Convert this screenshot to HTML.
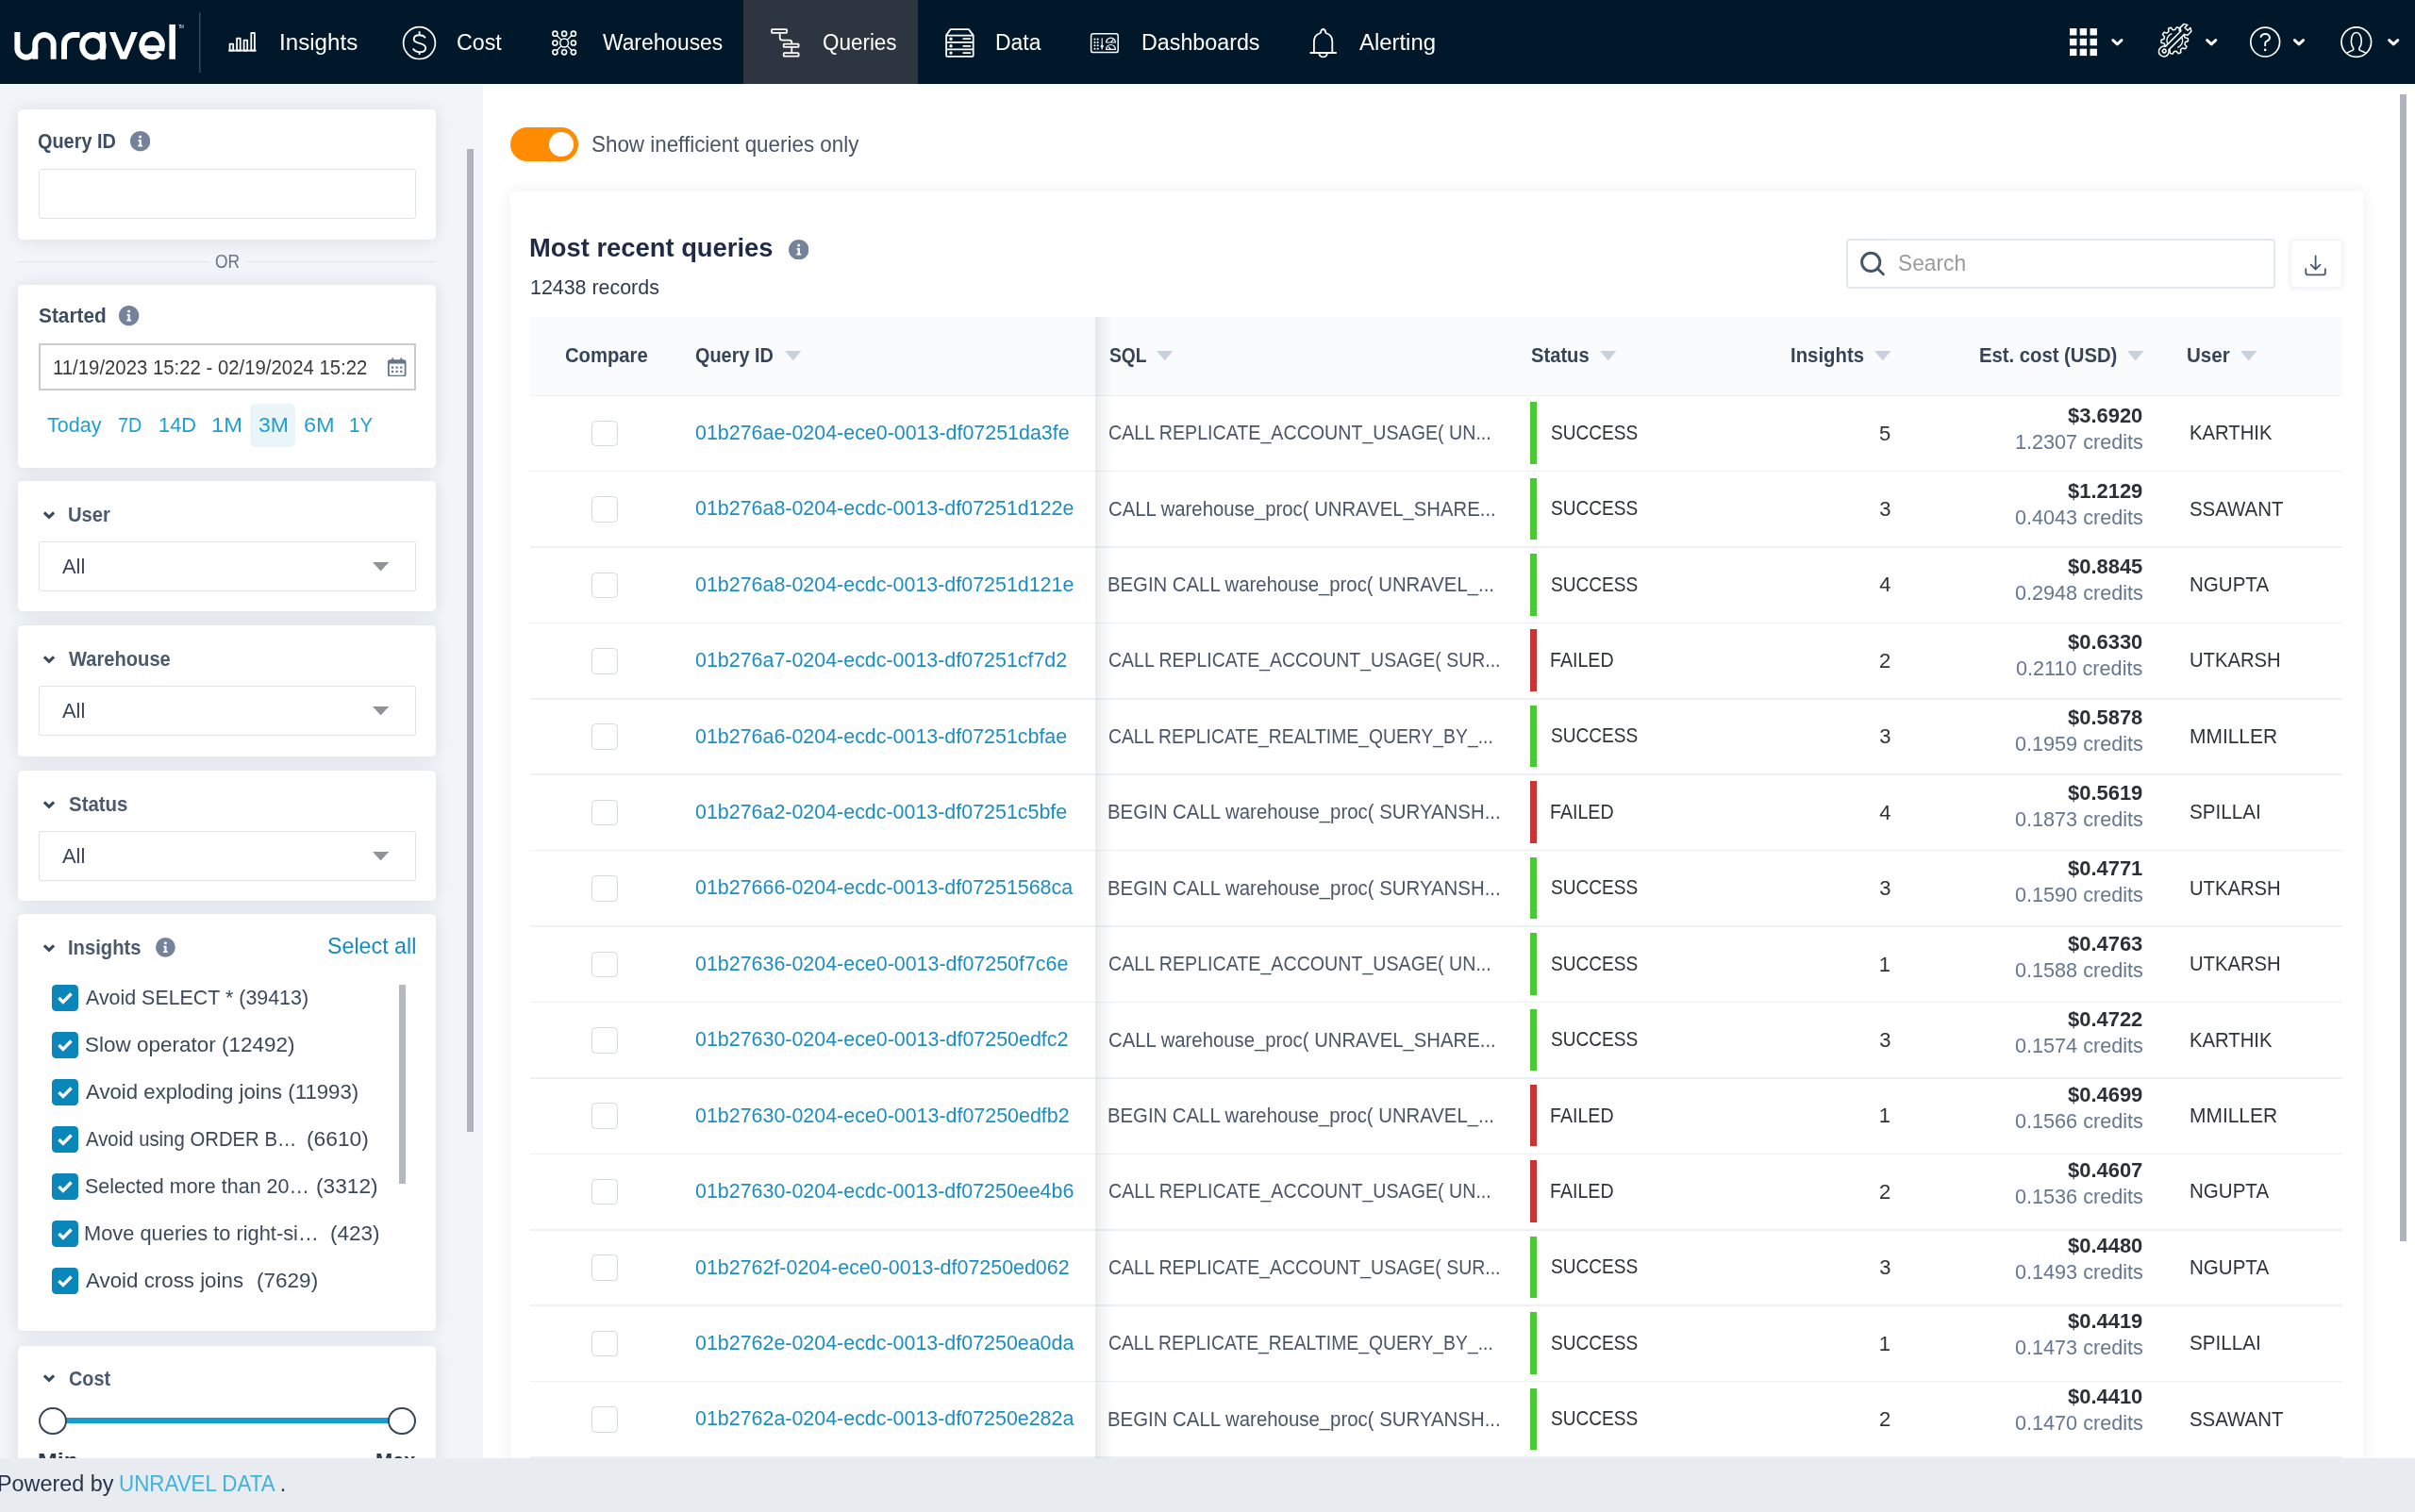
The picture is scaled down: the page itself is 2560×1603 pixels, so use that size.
<!DOCTYPE html>
<html><head><meta charset="utf-8"><title>Queries</title>
<style>
html,body{margin:0;padding:0;}
body{width:2560px;height:1603px;overflow:hidden;position:relative;background:#fff;font-family:"Liberation Sans",sans-serif;}
.t{position:absolute;line-height:1;white-space:pre;}
.L{will-change:transform;}
svg{display:block;}
</style></head><body>
<div style="position:absolute;left:512px;top:89px;width:2048px;height:1457px;background:#fff;overflow:hidden">
<div class="L" style="position:absolute;left:-512px;top:-89px;width:2560px;height:1603px">
<div style="position:absolute;left:541.00px;top:135.00px;width:72.00px;height:36.00px;background:#ff8c00;border-radius:18px"></div>
<div style="position:absolute;left:582.00px;top:140.00px;width:25.60px;height:25.60px;background:#fff;border-radius:50%"></div>
<div class="t" style="left:626.60px;top:141px;font-size:23.75px;color:#475467;transform:scaleX(0.9428);transform-origin:0 0;">Show inefficient queries only</div>
<div style="position:absolute;left:541.00px;top:202.50px;width:1964.00px;height:1500.00px;background:#fff;border-radius:5px;box-shadow:0 0 18px rgba(20,30,50,0.07)"></div>
<div class="t" style="left:561.36px;top:249px;font-size:27.75px;color:#1f2a46;font-weight:700;transform:scaleX(0.9858);transform-origin:0 0;">Most recent queries</div>
<svg style="position:absolute;left:835.85px;top:253.75px" width="21.5" height="21.5" viewBox="0 0 20 20"><circle cx="10" cy="10" r="10" fill="#74829a"/><circle cx="10" cy="5.6" r="1.45" fill="#fff"/><path d="M8,8.4 H11.1 V13.8 H12.3 V15.4 H7.8 V13.8 H9 V10 H8 Z" fill="#fff"/></svg>
<div class="t" style="left:561.50px;top:293px;font-size:22.75px;color:#2f3b4c;transform:scaleX(0.9409);transform-origin:0 0;">12438 records</div>
<div style="position:absolute;left:1956.80px;top:253.20px;width:454.80px;height:53.00px;border:2px solid #e3e8ee;box-sizing:border-box;border-radius:4px;background:#fff"></div>
<svg style="position:absolute;left:1971px;top:266px" width="28" height="28" viewBox="0 0 28 28"><circle cx="12.2" cy="11.9" r="9.6" fill="none" stroke="#45556a" stroke-width="2.9"/><path d="M19.2,18.8 L25.4,24.8" stroke="#45556a" stroke-width="2.9" stroke-linecap="round"/></svg>
<div class="t" style="left:2011.79px;top:268px;font-size:23.25px;color:#9b9b9b;transform:scaleX(0.9786);transform-origin:0 0;">Search</div>
<div style="position:absolute;left:2427.50px;top:254.00px;width:55.00px;height:51.00px;border:1px solid #f1f3f6;box-sizing:border-box;border-radius:4px;background:#fff;box-shadow:0 1px 6px rgba(30,40,60,0.08)"></div>
<svg style="position:absolute;left:2441.5px;top:270px" width="25" height="23" viewBox="0 0 25 23"><path d="M12.6,1.5 V15 M7.7,10.6 L12.6,15.4 L17.5,10.6" fill="none" stroke="#4a586b" stroke-width="1.8" stroke-linecap="round"/><path d="M2.3,15.2 V19.3 Q2.3,21.3 4.3,21.3 H20.9 Q22.9,21.3 22.9,19.3 V15.2" fill="none" stroke="#4a586b" stroke-width="1.8" stroke-linecap="round"/></svg>
<div style="position:absolute;left:562.30px;top:335.70px;width:1921.20px;height:83.30px;background:#fafbfc"></div>
<div style="position:absolute;left:562.30px;top:418.60px;width:1921.20px;height:1.60px;background:#eceff3"></div>
<div class="t" style="left:599.09px;top:365px;font-size:22.75px;color:#364457;font-weight:700;transform:scaleX(0.8898);transform-origin:0 0;">Compare</div>
<div class="t" style="left:737.41px;top:365px;font-size:22.75px;color:#364457;font-weight:700;transform:scaleX(0.8736);transform-origin:0 0;">Query ID</div>
<div class="t" style="left:1175.52px;top:365px;font-size:22.75px;color:#364457;font-weight:700;transform:scaleX(0.8443);transform-origin:0 0;">SQL</div>
<div class="t" style="left:1622.60px;top:365px;font-size:22.75px;color:#364457;font-weight:700;transform:scaleX(0.8864);transform-origin:0 0;">Status</div>
<div class="t" style="left:1898.28px;top:365px;font-size:22.75px;color:#364457;font-weight:700;transform:scaleX(0.8939);transform-origin:0 0;">Insights</div>
<div class="t" style="left:2098.08px;top:365px;font-size:22.75px;color:#364457;font-weight:700;transform:scaleX(0.8902);transform-origin:0 0;">Est. cost (USD)</div>
<div class="t" style="left:2318.27px;top:365px;font-size:22.75px;color:#364457;font-weight:700;transform:scaleX(0.9038);transform-origin:0 0;">User</div>
<svg style="position:absolute;left:831.7px;top:372.0px" width="17.5" height="10.4" viewBox="0 0 17.5 10.4"><path d="M0,0 H17.5 L8.8,10.4 Z" fill="#c9d1db"/></svg>
<svg style="position:absolute;left:1225.6px;top:372.0px" width="17.5" height="10.4" viewBox="0 0 17.5 10.4"><path d="M0,0 H17.5 L8.8,10.4 Z" fill="#c9d1db"/></svg>
<svg style="position:absolute;left:1695.5px;top:372.0px" width="17.5" height="10.4" viewBox="0 0 17.5 10.4"><path d="M0,0 H17.5 L8.8,10.4 Z" fill="#c9d1db"/></svg>
<svg style="position:absolute;left:1987.0px;top:372.0px" width="17.5" height="10.4" viewBox="0 0 17.5 10.4"><path d="M0,0 H17.5 L8.8,10.4 Z" fill="#c9d1db"/></svg>
<svg style="position:absolute;left:2254.7px;top:372.0px" width="17.5" height="10.4" viewBox="0 0 17.5 10.4"><path d="M0,0 H17.5 L8.8,10.4 Z" fill="#c9d1db"/></svg>
<svg style="position:absolute;left:2374.7px;top:372.0px" width="17.5" height="10.4" viewBox="0 0 17.5 10.4"><path d="M0,0 H17.5 L8.8,10.4 Z" fill="#c9d1db"/></svg>
<div style="position:absolute;left:627.30px;top:445.70px;width:27.60px;height:27.60px;border:1.6px solid #d3d9e1;box-sizing:border-box;border-radius:4.5px;background:#fff"></div>
<div class="t" style="left:736.96px;top:447px;font-size:22.75px;color:#1b8dc1;transform:scaleX(0.9415);transform-origin:0 0;">01b276ae-0204-ece0-0013-df07251da3fe</div>
<div class="t" style="left:1175.02px;top:448px;font-size:22.25px;color:#4a5668;transform:scaleX(0.8822);transform-origin:0 0;">CALL REPLICATE_ACCOUNT_USAGE( UN...</div>
<div style="position:absolute;left:1621.90px;top:426.20px;width:7.20px;height:65.50px;background:#4bc934"></div>
<div class="t" style="left:1643.94px;top:448px;font-size:21.75px;color:#2f3338;transform:scaleX(0.8775);transform-origin:0 0;">SUCCESS</div>
<div class="t" style="left:1992.04px;top:449px;font-size:22px;color:#2f3338;letter-spacing:0.000px;">5</div>
<div class="t" style="left:2192.48px;top:429px;font-size:22.75px;color:#2c2f33;font-weight:700;transform:scaleX(0.9645);transform-origin:0 0;">$3.6920</div>
<div class="t" style="left:2135.79px;top:457px;font-size:22.75px;color:#657690;transform:scaleX(0.9507);transform-origin:0 0;">1.2307 credits</div>
<div class="t" style="left:2320.68px;top:448px;font-size:21.75px;color:#2f3338;transform:scaleX(0.9317);transform-origin:0 0;">KARTHIK</div>
<div style="position:absolute;left:562.30px;top:498.81px;width:1921.20px;height:1.60px;background:#eef1f4"></div>
<div style="position:absolute;left:627.30px;top:526.12px;width:27.60px;height:27.60px;border:1.6px solid #d3d9e1;box-sizing:border-box;border-radius:4.5px;background:#fff"></div>
<div class="t" style="left:736.96px;top:527px;font-size:22.75px;color:#1b8dc1;transform:scaleX(0.9415);transform-origin:0 0;">01b276a8-0204-ecdc-0013-df07251d122e</div>
<div class="t" style="left:1174.99px;top:529px;font-size:22.25px;color:#4a5668;transform:scaleX(0.9123);transform-origin:0 0;">CALL warehouse_proc( UNRAVEL_SHARE...</div>
<div style="position:absolute;left:1621.90px;top:506.62px;width:7.20px;height:65.50px;background:#4bc934"></div>
<div class="t" style="left:1643.94px;top:528px;font-size:21.75px;color:#2f3338;transform:scaleX(0.8775);transform-origin:0 0;">SUCCESS</div>
<div class="t" style="left:1992.15px;top:529px;font-size:22px;color:#2f3338;letter-spacing:0.000px;">3</div>
<div class="t" style="left:2192.48px;top:509px;font-size:22.75px;color:#2c2f33;font-weight:700;transform:scaleX(0.9645);transform-origin:0 0;">$1.2129</div>
<div class="t" style="left:2135.79px;top:537px;font-size:22.75px;color:#657690;transform:scaleX(0.9507);transform-origin:0 0;">0.4043 credits</div>
<div class="t" style="left:2321.48px;top:529px;font-size:21.75px;color:#2f3338;transform:scaleX(0.9387);transform-origin:0 0;">SSAWANT</div>
<div style="position:absolute;left:562.30px;top:579.23px;width:1921.20px;height:1.60px;background:#eef1f4"></div>
<div style="position:absolute;left:627.30px;top:606.53px;width:27.60px;height:27.60px;border:1.6px solid #d3d9e1;box-sizing:border-box;border-radius:4.5px;background:#fff"></div>
<div class="t" style="left:736.96px;top:608px;font-size:22.75px;color:#1b8dc1;transform:scaleX(0.9415);transform-origin:0 0;">01b276a8-0204-ecdc-0013-df07251d121e</div>
<div class="t" style="left:1174.37px;top:609px;font-size:22.25px;color:#4a5668;transform:scaleX(0.9132);transform-origin:0 0;">BEGIN CALL warehouse_proc( UNRAVEL_...</div>
<div style="position:absolute;left:1621.90px;top:587.03px;width:7.20px;height:65.50px;background:#4bc934"></div>
<div class="t" style="left:1643.94px;top:609px;font-size:21.75px;color:#2f3338;transform:scaleX(0.8775);transform-origin:0 0;">SUCCESS</div>
<div class="t" style="left:1992.15px;top:609px;font-size:22px;color:#2f3338;letter-spacing:0.000px;">4</div>
<div class="t" style="left:2192.26px;top:589px;font-size:22.75px;color:#2c2f33;font-weight:700;transform:scaleX(0.9645);transform-origin:0 0;">$0.8845</div>
<div class="t" style="left:2135.79px;top:617px;font-size:22.75px;color:#657690;transform:scaleX(0.9507);transform-origin:0 0;">0.2948 credits</div>
<div class="t" style="left:2320.66px;top:609px;font-size:21.75px;color:#2f3338;transform:scaleX(0.9445);transform-origin:0 0;">NGUPTA</div>
<div style="position:absolute;left:562.30px;top:659.64px;width:1921.20px;height:1.60px;background:#eef1f4"></div>
<div style="position:absolute;left:627.30px;top:686.94px;width:27.60px;height:27.60px;border:1.6px solid #d3d9e1;box-sizing:border-box;border-radius:4.5px;background:#fff"></div>
<div class="t" style="left:736.96px;top:688px;font-size:22.75px;color:#1b8dc1;transform:scaleX(0.9415);transform-origin:0 0;">01b276a7-0204-ecdc-0013-df07251cf7d2</div>
<div class="t" style="left:1175.03px;top:689px;font-size:22.25px;color:#4a5668;transform:scaleX(0.8751);transform-origin:0 0;">CALL REPLICATE_ACCOUNT_USAGE( SUR...</div>
<div style="position:absolute;left:1621.90px;top:667.44px;width:7.20px;height:65.50px;background:#c93535"></div>
<div class="t" style="left:1643.13px;top:689px;font-size:21.75px;color:#2f3338;transform:scaleX(0.9019);transform-origin:0 0;">FAILED</div>
<div class="t" style="left:1992.04px;top:690px;font-size:22px;color:#2f3338;letter-spacing:0.000px;">2</div>
<div class="t" style="left:2192.48px;top:669px;font-size:22.75px;color:#2c2f33;font-weight:700;transform:scaleX(0.9645);transform-origin:0 0;">$0.6330</div>
<div class="t" style="left:2137.39px;top:697px;font-size:22.75px;color:#657690;transform:scaleX(0.9507);transform-origin:0 0;">0.2110 credits</div>
<div class="t" style="left:2320.88px;top:689px;font-size:21.75px;color:#2f3338;transform:scaleX(0.9302);transform-origin:0 0;">UTKARSH</div>
<div style="position:absolute;left:562.30px;top:740.06px;width:1921.20px;height:1.60px;background:#eef1f4"></div>
<div style="position:absolute;left:627.30px;top:767.36px;width:27.60px;height:27.60px;border:1.6px solid #d3d9e1;box-sizing:border-box;border-radius:4.5px;background:#fff"></div>
<div class="t" style="left:736.96px;top:769px;font-size:22.75px;color:#1b8dc1;transform:scaleX(0.9415);transform-origin:0 0;">01b276a6-0204-ecdc-0013-df07251cbfae</div>
<div class="t" style="left:1175.03px;top:770px;font-size:22.25px;color:#4a5668;transform:scaleX(0.8693);transform-origin:0 0;">CALL REPLICATE_REALTIME_QUERY_BY_...</div>
<div style="position:absolute;left:1621.90px;top:747.86px;width:7.20px;height:65.50px;background:#4bc934"></div>
<div class="t" style="left:1643.94px;top:769px;font-size:21.75px;color:#2f3338;transform:scaleX(0.8775);transform-origin:0 0;">SUCCESS</div>
<div class="t" style="left:1992.15px;top:770px;font-size:22px;color:#2f3338;letter-spacing:0.000px;">3</div>
<div class="t" style="left:2192.26px;top:749px;font-size:22.75px;color:#2c2f33;font-weight:700;transform:scaleX(0.9645);transform-origin:0 0;">$0.5878</div>
<div class="t" style="left:2135.79px;top:777px;font-size:22.75px;color:#657690;transform:scaleX(0.9507);transform-origin:0 0;">0.1959 credits</div>
<div class="t" style="left:2320.63px;top:770px;font-size:21.75px;color:#2f3338;transform:scaleX(0.9625);transform-origin:0 0;">MMILLER</div>
<div style="position:absolute;left:562.30px;top:820.48px;width:1921.20px;height:1.60px;background:#eef1f4"></div>
<div style="position:absolute;left:627.30px;top:847.78px;width:27.60px;height:27.60px;border:1.6px solid #d3d9e1;box-sizing:border-box;border-radius:4.5px;background:#fff"></div>
<div class="t" style="left:736.96px;top:849px;font-size:22.75px;color:#1b8dc1;transform:scaleX(0.9415);transform-origin:0 0;">01b276a2-0204-ecdc-0013-df07251c5bfe</div>
<div class="t" style="left:1174.37px;top:850px;font-size:22.25px;color:#4a5668;transform:scaleX(0.9164);transform-origin:0 0;">BEGIN CALL warehouse_proc( SURYANSH...</div>
<div style="position:absolute;left:1621.90px;top:828.28px;width:7.20px;height:65.50px;background:#c93535"></div>
<div class="t" style="left:1643.13px;top:850px;font-size:21.75px;color:#2f3338;transform:scaleX(0.9019);transform-origin:0 0;">FAILED</div>
<div class="t" style="left:1992.15px;top:851px;font-size:22px;color:#2f3338;letter-spacing:0.000px;">4</div>
<div class="t" style="left:2192.48px;top:829px;font-size:22.75px;color:#2c2f33;font-weight:700;transform:scaleX(0.9645);transform-origin:0 0;">$0.5619</div>
<div class="t" style="left:2135.79px;top:857px;font-size:22.75px;color:#657690;transform:scaleX(0.9507);transform-origin:0 0;">0.1873 credits</div>
<div class="t" style="left:2321.47px;top:850px;font-size:21.75px;color:#2f3338;transform:scaleX(0.9491);transform-origin:0 0;">SPILLAI</div>
<div style="position:absolute;left:562.30px;top:900.89px;width:1921.20px;height:1.60px;background:#eef1f4"></div>
<div style="position:absolute;left:627.30px;top:928.19px;width:27.60px;height:27.60px;border:1.6px solid #d3d9e1;box-sizing:border-box;border-radius:4.5px;background:#fff"></div>
<div class="t" style="left:736.96px;top:929px;font-size:22.75px;color:#1b8dc1;transform:scaleX(0.9415);transform-origin:0 0;">01b27666-0204-ecdc-0013-df07251568ca</div>
<div class="t" style="left:1174.37px;top:931px;font-size:22.25px;color:#4a5668;transform:scaleX(0.9164);transform-origin:0 0;">BEGIN CALL warehouse_proc( SURYANSH...</div>
<div style="position:absolute;left:1621.90px;top:908.69px;width:7.20px;height:65.50px;background:#4bc934"></div>
<div class="t" style="left:1643.94px;top:930px;font-size:21.75px;color:#2f3338;transform:scaleX(0.8775);transform-origin:0 0;">SUCCESS</div>
<div class="t" style="left:1992.15px;top:931px;font-size:22px;color:#2f3338;letter-spacing:0.000px;">3</div>
<div class="t" style="left:2192.26px;top:909px;font-size:22.75px;color:#2c2f33;font-weight:700;transform:scaleX(0.9645);transform-origin:0 0;">$0.4771</div>
<div class="t" style="left:2135.79px;top:937px;font-size:22.75px;color:#657690;transform:scaleX(0.9507);transform-origin:0 0;">0.1590 credits</div>
<div class="t" style="left:2320.88px;top:931px;font-size:21.75px;color:#2f3338;transform:scaleX(0.9302);transform-origin:0 0;">UTKARSH</div>
<div style="position:absolute;left:562.30px;top:981.31px;width:1921.20px;height:1.60px;background:#eef1f4"></div>
<div style="position:absolute;left:627.30px;top:1008.61px;width:27.60px;height:27.60px;border:1.6px solid #d3d9e1;box-sizing:border-box;border-radius:4.5px;background:#fff"></div>
<div class="t" style="left:736.96px;top:1010px;font-size:22.75px;color:#1b8dc1;transform:scaleX(0.9415);transform-origin:0 0;">01b27636-0204-ece0-0013-df07250f7c6e</div>
<div class="t" style="left:1175.02px;top:1011px;font-size:22.25px;color:#4a5668;transform:scaleX(0.8822);transform-origin:0 0;">CALL REPLICATE_ACCOUNT_USAGE( UN...</div>
<div style="position:absolute;left:1621.90px;top:989.11px;width:7.20px;height:65.50px;background:#4bc934"></div>
<div class="t" style="left:1643.94px;top:1011px;font-size:21.75px;color:#2f3338;transform:scaleX(0.8775);transform-origin:0 0;">SUCCESS</div>
<div class="t" style="left:1991.82px;top:1012px;font-size:22px;color:#2f3338;letter-spacing:0.000px;">1</div>
<div class="t" style="left:2192.48px;top:989px;font-size:22.75px;color:#2c2f33;font-weight:700;transform:scaleX(0.9645);transform-origin:0 0;">$0.4763</div>
<div class="t" style="left:2135.79px;top:1017px;font-size:22.75px;color:#657690;transform:scaleX(0.9507);transform-origin:0 0;">0.1588 credits</div>
<div class="t" style="left:2320.88px;top:1011px;font-size:21.75px;color:#2f3338;transform:scaleX(0.9302);transform-origin:0 0;">UTKARSH</div>
<div style="position:absolute;left:562.30px;top:1061.72px;width:1921.20px;height:1.60px;background:#eef1f4"></div>
<div style="position:absolute;left:627.30px;top:1089.02px;width:27.60px;height:27.60px;border:1.6px solid #d3d9e1;box-sizing:border-box;border-radius:4.5px;background:#fff"></div>
<div class="t" style="left:736.96px;top:1090px;font-size:22.75px;color:#1b8dc1;transform:scaleX(0.9415);transform-origin:0 0;">01b27630-0204-ece0-0013-df07250edfc2</div>
<div class="t" style="left:1174.99px;top:1092px;font-size:22.25px;color:#4a5668;transform:scaleX(0.9123);transform-origin:0 0;">CALL warehouse_proc( UNRAVEL_SHARE...</div>
<div style="position:absolute;left:1621.90px;top:1069.52px;width:7.20px;height:65.50px;background:#4bc934"></div>
<div class="t" style="left:1643.94px;top:1091px;font-size:21.75px;color:#2f3338;transform:scaleX(0.8775);transform-origin:0 0;">SUCCESS</div>
<div class="t" style="left:1992.15px;top:1092px;font-size:22px;color:#2f3338;letter-spacing:0.000px;">3</div>
<div class="t" style="left:2192.48px;top:1069px;font-size:22.75px;color:#2c2f33;font-weight:700;transform:scaleX(0.9645);transform-origin:0 0;">$0.4722</div>
<div class="t" style="left:2135.79px;top:1097px;font-size:22.75px;color:#657690;transform:scaleX(0.9507);transform-origin:0 0;">0.1574 credits</div>
<div class="t" style="left:2320.68px;top:1092px;font-size:21.75px;color:#2f3338;transform:scaleX(0.9317);transform-origin:0 0;">KARTHIK</div>
<div style="position:absolute;left:562.30px;top:1142.13px;width:1921.20px;height:1.60px;background:#eef1f4"></div>
<div style="position:absolute;left:627.30px;top:1169.43px;width:27.60px;height:27.60px;border:1.6px solid #d3d9e1;box-sizing:border-box;border-radius:4.5px;background:#fff"></div>
<div class="t" style="left:736.96px;top:1171px;font-size:22.75px;color:#1b8dc1;transform:scaleX(0.9415);transform-origin:0 0;">01b27630-0204-ece0-0013-df07250edfb2</div>
<div class="t" style="left:1174.37px;top:1172px;font-size:22.25px;color:#4a5668;transform:scaleX(0.9132);transform-origin:0 0;">BEGIN CALL warehouse_proc( UNRAVEL_...</div>
<div style="position:absolute;left:1621.90px;top:1149.93px;width:7.20px;height:65.50px;background:#c93535"></div>
<div class="t" style="left:1643.13px;top:1172px;font-size:21.75px;color:#2f3338;transform:scaleX(0.9019);transform-origin:0 0;">FAILED</div>
<div class="t" style="left:1991.82px;top:1172px;font-size:22px;color:#2f3338;letter-spacing:0.000px;">1</div>
<div class="t" style="left:2192.48px;top:1149px;font-size:22.75px;color:#2c2f33;font-weight:700;transform:scaleX(0.9645);transform-origin:0 0;">$0.4699</div>
<div class="t" style="left:2135.79px;top:1177px;font-size:22.75px;color:#657690;transform:scaleX(0.9507);transform-origin:0 0;">0.1566 credits</div>
<div class="t" style="left:2320.63px;top:1172px;font-size:21.75px;color:#2f3338;transform:scaleX(0.9625);transform-origin:0 0;">MMILLER</div>
<div style="position:absolute;left:562.30px;top:1222.55px;width:1921.20px;height:1.60px;background:#eef1f4"></div>
<div style="position:absolute;left:627.30px;top:1249.85px;width:27.60px;height:27.60px;border:1.6px solid #d3d9e1;box-sizing:border-box;border-radius:4.5px;background:#fff"></div>
<div class="t" style="left:736.96px;top:1251px;font-size:22.75px;color:#1b8dc1;transform:scaleX(0.9415);transform-origin:0 0;">01b27630-0204-ecdc-0013-df07250ee4b6</div>
<div class="t" style="left:1175.02px;top:1252px;font-size:22.25px;color:#4a5668;transform:scaleX(0.8822);transform-origin:0 0;">CALL REPLICATE_ACCOUNT_USAGE( UN...</div>
<div style="position:absolute;left:1621.90px;top:1230.35px;width:7.20px;height:65.50px;background:#c93535"></div>
<div class="t" style="left:1643.13px;top:1252px;font-size:21.75px;color:#2f3338;transform:scaleX(0.9019);transform-origin:0 0;">FAILED</div>
<div class="t" style="left:1992.04px;top:1253px;font-size:22px;color:#2f3338;letter-spacing:0.000px;">2</div>
<div class="t" style="left:2192.48px;top:1229px;font-size:22.75px;color:#2c2f33;font-weight:700;transform:scaleX(0.9645);transform-origin:0 0;">$0.4607</div>
<div class="t" style="left:2135.79px;top:1257px;font-size:22.75px;color:#657690;transform:scaleX(0.9507);transform-origin:0 0;">0.1536 credits</div>
<div class="t" style="left:2320.66px;top:1252px;font-size:21.75px;color:#2f3338;transform:scaleX(0.9445);transform-origin:0 0;">NGUPTA</div>
<div style="position:absolute;left:562.30px;top:1302.97px;width:1921.20px;height:1.60px;background:#eef1f4"></div>
<div style="position:absolute;left:627.30px;top:1330.27px;width:27.60px;height:27.60px;border:1.6px solid #d3d9e1;box-sizing:border-box;border-radius:4.5px;background:#fff"></div>
<div class="t" style="left:736.96px;top:1332px;font-size:22.75px;color:#1b8dc1;transform:scaleX(0.9415);transform-origin:0 0;">01b2762f-0204-ece0-0013-df07250ed062</div>
<div class="t" style="left:1175.03px;top:1333px;font-size:22.25px;color:#4a5668;transform:scaleX(0.8751);transform-origin:0 0;">CALL REPLICATE_ACCOUNT_USAGE( SUR...</div>
<div style="position:absolute;left:1621.90px;top:1310.77px;width:7.20px;height:65.50px;background:#4bc934"></div>
<div class="t" style="left:1643.94px;top:1332px;font-size:21.75px;color:#2f3338;transform:scaleX(0.8775);transform-origin:0 0;">SUCCESS</div>
<div class="t" style="left:1992.15px;top:1333px;font-size:22px;color:#2f3338;letter-spacing:0.000px;">3</div>
<div class="t" style="left:2192.48px;top:1309px;font-size:22.75px;color:#2c2f33;font-weight:700;transform:scaleX(0.9645);transform-origin:0 0;">$0.4480</div>
<div class="t" style="left:2135.79px;top:1337px;font-size:22.75px;color:#657690;transform:scaleX(0.9507);transform-origin:0 0;">0.1493 credits</div>
<div class="t" style="left:2320.66px;top:1333px;font-size:21.75px;color:#2f3338;transform:scaleX(0.9445);transform-origin:0 0;">NGUPTA</div>
<div style="position:absolute;left:562.30px;top:1383.38px;width:1921.20px;height:1.60px;background:#eef1f4"></div>
<div style="position:absolute;left:627.30px;top:1410.68px;width:27.60px;height:27.60px;border:1.6px solid #d3d9e1;box-sizing:border-box;border-radius:4.5px;background:#fff"></div>
<div class="t" style="left:736.96px;top:1412px;font-size:22.75px;color:#1b8dc1;transform:scaleX(0.9415);transform-origin:0 0;">01b2762e-0204-ecdc-0013-df07250ea0da</div>
<div class="t" style="left:1175.03px;top:1413px;font-size:22.25px;color:#4a5668;transform:scaleX(0.8693);transform-origin:0 0;">CALL REPLICATE_REALTIME_QUERY_BY_...</div>
<div style="position:absolute;left:1621.90px;top:1391.18px;width:7.20px;height:65.50px;background:#4bc934"></div>
<div class="t" style="left:1643.94px;top:1413px;font-size:21.75px;color:#2f3338;transform:scaleX(0.8775);transform-origin:0 0;">SUCCESS</div>
<div class="t" style="left:1991.82px;top:1414px;font-size:22px;color:#2f3338;letter-spacing:0.000px;">1</div>
<div class="t" style="left:2192.48px;top:1389px;font-size:22.75px;color:#2c2f33;font-weight:700;transform:scaleX(0.9645);transform-origin:0 0;">$0.4419</div>
<div class="t" style="left:2135.79px;top:1417px;font-size:22.75px;color:#657690;transform:scaleX(0.9507);transform-origin:0 0;">0.1473 credits</div>
<div class="t" style="left:2321.47px;top:1413px;font-size:21.75px;color:#2f3338;transform:scaleX(0.9491);transform-origin:0 0;">SPILLAI</div>
<div style="position:absolute;left:562.30px;top:1463.80px;width:1921.20px;height:1.60px;background:#eef1f4"></div>
<div style="position:absolute;left:627.30px;top:1491.10px;width:27.60px;height:27.60px;border:1.6px solid #d3d9e1;box-sizing:border-box;border-radius:4.5px;background:#fff"></div>
<div class="t" style="left:736.96px;top:1492px;font-size:22.75px;color:#1b8dc1;transform:scaleX(0.9415);transform-origin:0 0;">01b2762a-0204-ecdc-0013-df07250e282a</div>
<div class="t" style="left:1174.37px;top:1494px;font-size:22.25px;color:#4a5668;transform:scaleX(0.9164);transform-origin:0 0;">BEGIN CALL warehouse_proc( SURYANSH...</div>
<div style="position:absolute;left:1621.90px;top:1471.60px;width:7.20px;height:65.50px;background:#4bc934"></div>
<div class="t" style="left:1643.94px;top:1493px;font-size:21.75px;color:#2f3338;transform:scaleX(0.8775);transform-origin:0 0;">SUCCESS</div>
<div class="t" style="left:1992.04px;top:1494px;font-size:22px;color:#2f3338;letter-spacing:0.000px;">2</div>
<div class="t" style="left:2192.48px;top:1469px;font-size:22.75px;color:#2c2f33;font-weight:700;transform:scaleX(0.9645);transform-origin:0 0;">$0.4410</div>
<div class="t" style="left:2135.79px;top:1497px;font-size:22.75px;color:#657690;transform:scaleX(0.9507);transform-origin:0 0;">0.1470 credits</div>
<div class="t" style="left:2321.48px;top:1494px;font-size:21.75px;color:#2f3338;transform:scaleX(0.9387);transform-origin:0 0;">SSAWANT</div>
<div style="position:absolute;left:562.30px;top:1544.21px;width:1921.20px;height:1.60px;background:#eef1f4"></div>
<div style="position:absolute;left:1160.80px;top:335.70px;width:20.00px;height:1300.00px;background:linear-gradient(to right, rgba(30,40,60,0.10), rgba(30,40,60,0.05) 30%, rgba(30,40,60,0))"></div>
<div style="position:absolute;left:2544.00px;top:100.00px;width:7.20px;height:1216.00px;background:#afb3bc"></div>
</div></div>
<div style="position:absolute;left:0;top:89px;width:512px;height:1457px;overflow:hidden">
<div class="L" style="position:absolute;left:0;top:-89px;width:512px;height:1603px">
<div style="position:absolute;left:0.00px;top:89.00px;width:512.00px;height:1457.00px;background:#f1f4f8"></div>
<div style="position:absolute;left:0.00px;top:89.00px;width:512.00px;height:2.00px;background:#f8fafc"></div>
<div style="position:absolute;left:19.00px;top:116.00px;width:443.00px;height:137.60px;background:#fff;border-radius:5px;box-shadow:0 1px 18px rgba(30,40,60,0.10)"></div>
<div class="t" style="left:40.31px;top:138px;font-size:22.75px;color:#3d4d61;font-weight:700;transform:scaleX(0.8736);transform-origin:0 0;">Query ID</div>
<svg style="position:absolute;left:138.15px;top:139.25px" width="21.3" height="21.3" viewBox="0 0 20 20"><circle cx="10" cy="10" r="10" fill="#74829a"/><circle cx="10" cy="5.6" r="1.45" fill="#fff"/><path d="M8,8.4 H11.1 V13.8 H12.3 V15.4 H7.8 V13.8 H9 V10 H8 Z" fill="#fff"/></svg>
<div style="position:absolute;left:41.20px;top:179.40px;width:399.60px;height:52.30px;border:1.5px solid #dde3ea;box-sizing:border-box;border-radius:3px;background:#fff"></div>
<div style="position:absolute;left:19.00px;top:277.20px;width:202.00px;height:1.20px;background:#dde2e8"></div>
<div style="position:absolute;left:261.00px;top:277.20px;width:201.00px;height:1.20px;background:#dde2e8"></div>
<div class="t" style="left:227.90px;top:268px;font-size:19.5px;color:#6a7686;transform:scaleX(0.8934);transform-origin:0 0;">OR</div>
<div style="position:absolute;left:19.00px;top:302.00px;width:443.00px;height:193.50px;background:#fff;border-radius:5px;box-shadow:0 1px 18px rgba(30,40,60,0.10)"></div>
<div class="t" style="left:40.68px;top:323px;font-size:22.75px;color:#3d4d61;font-weight:700;transform:scaleX(0.9145);transform-origin:0 0;">Started</div>
<svg style="position:absolute;left:126.45px;top:324.35px" width="21.3" height="21.3" viewBox="0 0 20 20"><circle cx="10" cy="10" r="10" fill="#74829a"/><circle cx="10" cy="5.6" r="1.45" fill="#fff"/><path d="M8,8.4 H11.1 V13.8 H12.3 V15.4 H7.8 V13.8 H9 V10 H8 Z" fill="#fff"/></svg>
<div style="position:absolute;left:41.00px;top:364.00px;width:400.00px;height:49.50px;border:2px solid #c9cbcf;box-sizing:border-box;background:#fff"></div>
<div class="t" style="left:55.58px;top:379px;font-size:21.75px;color:#3b3b3d;transform:scaleX(0.9354);transform-origin:0 0;">11/19/2023 15:22 - 02/19/2024 15:22</div>
<svg style="position:absolute;left:411px;top:378.5px" width="19.5" height="20.5" viewBox="0 0 19.5 20.5"><rect x="0.9" y="3.2" width="17.7" height="16.4" rx="1.6" fill="none" stroke="#66768a" stroke-width="1.8"/><rect x="0.9" y="3.2" width="17.7" height="3.4" fill="#66768a"/><rect x="4.3" y="0.4" width="1.8" height="4" fill="#66768a"/><rect x="13.4" y="0.4" width="1.8" height="4" fill="#66768a"/><g fill="#66768a"><rect x="4" y="9.5" width="2.2" height="2.2"/><rect x="8.6" y="9.5" width="2.2" height="2.2"/><rect x="13.2" y="9.5" width="2.2" height="2.2"/><rect x="4" y="13.8" width="2.2" height="2.2"/><rect x="8.6" y="13.8" width="2.2" height="2.2"/><rect x="13.2" y="13.8" width="2.2" height="2.2"/></g></svg>
<div style="position:absolute;left:265.00px;top:428.00px;width:48.00px;height:46.00px;background:#e9f5f9;border-radius:6px"></div>
<div class="t" style="left:49.57px;top:439px;font-size:22.75px;color:#1fa0d2;transform:scaleX(0.9460);transform-origin:0 0;">Today</div>
<div class="t" style="left:125.41px;top:439px;font-size:22.75px;color:#1fa0d2;transform:scaleX(0.8746);transform-origin:0 0;">7D</div>
<div class="t" style="left:167.87px;top:439px;font-size:22.75px;color:#1fa0d2;transform:scaleX(0.9596);transform-origin:0 0;">14D</div>
<div class="t" style="left:223.84px;top:439px;font-size:22.75px;color:#1fa0d2;transform:scaleX(1.0406);transform-origin:0 0;">1M</div>
<div class="t" style="left:273.71px;top:439px;font-size:22.75px;color:#1fa0d2;transform:scaleX(1.0116);transform-origin:0 0;">3M</div>
<div class="t" style="left:321.82px;top:439px;font-size:22.75px;color:#1fa0d2;transform:scaleX(1.0345);transform-origin:0 0;">6M</div>
<div class="t" style="left:370.26px;top:439px;font-size:22.75px;color:#1fa0d2;transform:scaleX(0.9014);transform-origin:0 0;">1Y</div>
<div style="position:absolute;left:19.00px;top:510.20px;width:443.00px;height:138.30px;background:#fff;border-radius:5px;box-shadow:0 1px 18px rgba(30,40,60,0.10)"></div>
<svg style="position:absolute;left:45.0px;top:541.2px" width="14" height="11" viewBox="0 0 14 11"><path d="M1.9,2.3 L7,7.4 L12.1,2.3" fill="none" stroke="#3a4a5e" stroke-width="3.1"/></svg>
<div class="t" style="left:71.79px;top:534px;font-size:22.75px;color:#4a5a6e;font-weight:700;transform:scaleX(0.8895);transform-origin:0 0;">User</div>
<div style="position:absolute;left:41.00px;top:574.00px;width:399.50px;height:52.80px;background:#fff;border:1.5px solid #dfe3e8;box-sizing:border-box;border-radius:2px"></div><div class="t" style="left:66.20px;top:589px;font-size:22.75px;color:#38465a;transform:scaleX(0.9636);transform-origin:0 0;">All</div><svg style="position:absolute;left:394.8px;top:596.3px" width="17.2" height="9.4" viewBox="0 0 17.2 9.4"><path d="M0,0 H17.2 L8.6,9.4 Z" fill="#8f9398"/></svg>
<div style="position:absolute;left:19.00px;top:663.00px;width:443.00px;height:138.80px;background:#fff;border-radius:5px;box-shadow:0 1px 18px rgba(30,40,60,0.10)"></div>
<svg style="position:absolute;left:45.0px;top:694.0px" width="14" height="11" viewBox="0 0 14 11"><path d="M1.9,2.3 L7,7.4 L12.1,2.3" fill="none" stroke="#3a4a5e" stroke-width="3.1"/></svg>
<div class="t" style="left:73.00px;top:687px;font-size:22.75px;color:#4a5a6e;font-weight:700;transform:scaleX(0.8854);transform-origin:0 0;">Warehouse</div>
<div style="position:absolute;left:41.00px;top:726.80px;width:399.50px;height:52.80px;background:#fff;border:1.5px solid #dfe3e8;box-sizing:border-box;border-radius:2px"></div><div class="t" style="left:66.20px;top:742px;font-size:22.75px;color:#38465a;transform:scaleX(0.9636);transform-origin:0 0;">All</div><svg style="position:absolute;left:394.8px;top:749.1px" width="17.2" height="9.4" viewBox="0 0 17.2 9.4"><path d="M0,0 H17.2 L8.6,9.4 Z" fill="#8f9398"/></svg>
<div style="position:absolute;left:19.00px;top:817.00px;width:443.00px;height:138.30px;background:#fff;border-radius:5px;box-shadow:0 1px 18px rgba(30,40,60,0.10)"></div>
<svg style="position:absolute;left:45.0px;top:848.0px" width="14" height="11" viewBox="0 0 14 11"><path d="M1.9,2.3 L7,7.4 L12.1,2.3" fill="none" stroke="#3a4a5e" stroke-width="3.1"/></svg>
<div class="t" style="left:72.59px;top:841px;font-size:22.75px;color:#4a5a6e;font-weight:700;transform:scaleX(0.8982);transform-origin:0 0;">Status</div>
<div style="position:absolute;left:41.00px;top:880.80px;width:399.50px;height:52.80px;background:#fff;border:1.5px solid #dfe3e8;box-sizing:border-box;border-radius:2px"></div><div class="t" style="left:66.20px;top:896px;font-size:22.75px;color:#38465a;transform:scaleX(0.9636);transform-origin:0 0;">All</div><svg style="position:absolute;left:394.8px;top:903.1px" width="17.2" height="9.4" viewBox="0 0 17.2 9.4"><path d="M0,0 H17.2 L8.6,9.4 Z" fill="#8f9398"/></svg>
<div style="position:absolute;left:19.00px;top:969.40px;width:443.00px;height:441.90px;background:#fff;border-radius:5px;box-shadow:0 1px 18px rgba(30,40,60,0.10)"></div>
<svg style="position:absolute;left:45.0px;top:1000.0px" width="14" height="11" viewBox="0 0 14 11"><path d="M1.9,2.3 L7,7.4 L12.1,2.3" fill="none" stroke="#3a4a5e" stroke-width="3.1"/></svg>
<div class="t" style="left:72.19px;top:993px;font-size:22.75px;color:#4a5a6e;font-weight:700;transform:scaleX(0.8892);transform-origin:0 0;">Insights</div>
<svg style="position:absolute;left:165.00px;top:993.90px" width="20.8" height="20.8" viewBox="0 0 20 20"><circle cx="10" cy="10" r="10" fill="#74829a"/><circle cx="10" cy="5.6" r="1.45" fill="#fff"/><path d="M8,8.4 H11.1 V13.8 H12.3 V15.4 H7.8 V13.8 H9 V10 H8 Z" fill="#fff"/></svg>
<div class="t" style="left:346.77px;top:991px;font-size:23.75px;color:#168bbf;transform:scaleX(0.9793);transform-origin:0 0;">Select all</div>
<div style="position:absolute;left:55.30px;top:1044.00px;width:27.70px;height:27.70px;background:#0987bb;border-radius:4.5px"></div>
<svg style="position:absolute;left:55.3px;top:1044.00px" width="27.7" height="27.7" viewBox="0 0 28 28"><path d="M7.5,14.2 L12,18.6 L20.8,9.6" fill="none" stroke="#fff" stroke-width="3.4"/></svg>
<div class="t" style="left:91.00px;top:1046px;font-size:22.75px;color:#3c4959;transform:scaleX(0.9411);transform-origin:0 0;">Avoid SELECT * (39413)</div>
<div style="position:absolute;left:55.30px;top:1094.06px;width:27.70px;height:27.70px;background:#0987bb;border-radius:4.5px"></div>
<svg style="position:absolute;left:55.3px;top:1094.06px" width="27.7" height="27.7" viewBox="0 0 28 28"><path d="M7.5,14.2 L12,18.6 L20.8,9.6" fill="none" stroke="#fff" stroke-width="3.4"/></svg>
<div class="t" style="left:90.10px;top:1096px;font-size:22.75px;color:#3c4959;transform:scaleX(0.9880);transform-origin:0 0;">Slow operator (12492)</div>
<div style="position:absolute;left:55.30px;top:1144.12px;width:27.70px;height:27.70px;background:#0987bb;border-radius:4.5px"></div>
<svg style="position:absolute;left:55.3px;top:1144.12px" width="27.7" height="27.7" viewBox="0 0 28 28"><path d="M7.5,14.2 L12,18.6 L20.8,9.6" fill="none" stroke="#fff" stroke-width="3.4"/></svg>
<div class="t" style="left:91.00px;top:1146px;font-size:22.75px;color:#3c4959;transform:scaleX(0.9757);transform-origin:0 0;">Avoid exploding joins (11993)</div>
<div style="position:absolute;left:55.30px;top:1194.18px;width:27.70px;height:27.70px;background:#0987bb;border-radius:4.5px"></div>
<svg style="position:absolute;left:55.3px;top:1194.18px" width="27.7" height="27.7" viewBox="0 0 28 28"><path d="M7.5,14.2 L12,18.6 L20.8,9.6" fill="none" stroke="#fff" stroke-width="3.4"/></svg>
<div class="t" style="left:91.00px;top:1196px;font-size:22.75px;color:#3c4959;transform:scaleX(0.8936);transform-origin:0 0;">Avoid using ORDER B…</div>
<div class="t" style="left:325.03px;top:1196px;font-size:22.75px;color:#3c4959;transform:scaleX(1.0017);transform-origin:0 0;">(6610)</div>
<div style="position:absolute;left:55.30px;top:1244.24px;width:27.70px;height:27.70px;background:#0987bb;border-radius:4.5px"></div>
<svg style="position:absolute;left:55.3px;top:1244.24px" width="27.7" height="27.7" viewBox="0 0 28 28"><path d="M7.5,14.2 L12,18.6 L20.8,9.6" fill="none" stroke="#fff" stroke-width="3.4"/></svg>
<div class="t" style="left:90.14px;top:1246px;font-size:22.75px;color:#3c4959;transform:scaleX(0.9459);transform-origin:0 0;">Selected more than 20…</div>
<div class="t" style="left:335.24px;top:1246px;font-size:22.75px;color:#3c4959;transform:scaleX(0.9970);transform-origin:0 0;">(3312)</div>
<div style="position:absolute;left:55.30px;top:1294.30px;width:27.70px;height:27.70px;background:#0987bb;border-radius:4.5px"></div>
<svg style="position:absolute;left:55.3px;top:1294.30px" width="27.7" height="27.7" viewBox="0 0 28 28"><path d="M7.5,14.2 L12,18.6 L20.8,9.6" fill="none" stroke="#fff" stroke-width="3.4"/></svg>
<div class="t" style="left:89.25px;top:1296px;font-size:22.75px;color:#3c4959;transform:scaleX(0.9598);transform-origin:0 0;">Move queries to right-si…</div>
<div class="t" style="left:349.65px;top:1296px;font-size:22.75px;color:#3c4959;transform:scaleX(0.9893);transform-origin:0 0;">(423)</div>
<div style="position:absolute;left:55.30px;top:1344.36px;width:27.70px;height:27.70px;background:#0987bb;border-radius:4.5px"></div>
<svg style="position:absolute;left:55.3px;top:1344.36px" width="27.7" height="27.7" viewBox="0 0 28 28"><path d="M7.5,14.2 L12,18.6 L20.8,9.6" fill="none" stroke="#fff" stroke-width="3.4"/></svg>
<div class="t" style="left:91.00px;top:1346px;font-size:22.75px;color:#3c4959;transform:scaleX(0.9811);transform-origin:0 0;">Avoid cross joins</div>
<div class="t" style="left:271.55px;top:1346px;font-size:22.75px;color:#3c4959;transform:scaleX(0.9907);transform-origin:0 0;">(7629)</div>
<div style="position:absolute;left:423.30px;top:1044.00px;width:6.50px;height:210.50px;background:#b4b8c0"></div>
<div style="position:absolute;left:19.00px;top:1426.50px;width:443.00px;height:173.50px;background:#fff;border-radius:5px;box-shadow:0 1px 18px rgba(30,40,60,0.10)"></div>
<svg style="position:absolute;left:45.0px;top:1456.0px" width="14" height="11" viewBox="0 0 14 11"><path d="M1.9,2.3 L7,7.4 L12.1,2.3" fill="none" stroke="#3a4a5e" stroke-width="3.1"/></svg>
<div class="t" style="left:72.61px;top:1450px;font-size:22.75px;color:#4a5a6e;font-weight:700;transform:scaleX(0.8714);transform-origin:0 0;">Cost</div>
<div style="position:absolute;left:56.00px;top:1503.20px;width:370.00px;height:6.20px;background:#1a9bd0"></div>
<div style="position:absolute;left:41.20px;top:1492.00px;width:29.40px;height:29.40px;background:#fff;border:2.2px solid #3a4656;border-radius:50%;box-sizing:border-box"></div>
<div style="position:absolute;left:411.40px;top:1492.00px;width:29.40px;height:29.40px;background:#fff;border:2.2px solid #3a4656;border-radius:50%;box-sizing:border-box"></div>
<div class="t" style="left:40.20px;top:1537px;font-size:22.75px;color:#2d3a4b;font-weight:700;transform:scaleX(1.0983);transform-origin:0 0;">Min</div>
<div class="t" style="left:397.69px;top:1537px;font-size:22.75px;color:#2d3a4b;font-weight:700;transform:scaleX(0.9590);transform-origin:0 0;">Max</div>
<div style="position:absolute;left:494.80px;top:158.00px;width:7.00px;height:1042.00px;background:#aeb3bc"></div>
</div></div>
<div class="L" style="position:absolute;left:0;top:0;width:2560px;height:1603px">
<div style="position:absolute;left:0.00px;top:1546.00px;width:2560.00px;height:57.00px;background:#e8ebf0"></div>
<div class="t" style="left:-3.37px;top:1561px;font-size:24.25px;color:#28344a;transform:scaleX(0.9634);transform-origin:0 0;">Powered by</div>
<div class="t" style="left:125.63px;top:1561px;font-size:24.25px;color:#3fb3dd;transform:scaleX(0.9221);transform-origin:0 0;">UNRAVEL DATA</div>
<div class="t" style="left:296.69px;top:1562px;font-size:23.5px;color:#28344a;letter-spacing:0.000px;">.</div>
</div>
<div class="L" style="position:absolute;left:0;top:0;width:2560px;height:89px">
<div style="position:absolute;left:0;top:0;width:2560px;height:89px;background:#01182b;z-index:5">
<div style="position:absolute;left:787.50px;top:0.00px;width:185.20px;height:89.00px;background:#2c3540"></div>
<svg style="position:absolute;left:0;top:0" width="2560" height="89" viewBox="0 0 2560 89"><g fill="none" stroke="#fff" stroke-width="6"><path d="M18.4,33.9 V51.3 A9.45,9.45 0 0 0 37.3,51.3"/><path d="M37.3,62.8 V46.6 A9.675,9.675 0 0 1 56.65,46.6 V62.8"/><path d="M68,62.8 V46.9 A10,10 0 0 1 78,36.9 H84.5"/><ellipse cx="98.4" cy="48.8" rx="11.2" ry="11.9"/><path d="M108.8,33.9 V62.8"/><path d="M150.0,51.3 H171.5 A10.75,12.1 0 1 0 169.4,55.9"/></g><polygon fill="#fff" points="115.8,33.9 122.3,33.9 131,55.4 139.5,33.9 146,33.9 134.3,62.8 127.6,62.8"/><rect fill="#fff" x="179.4" y="25.9" width="6.5" height="36.9"/><text x="189.2" y="29.6" font-size="4.6" font-family="Liberation Sans" fill="#e8e8e8" textLength="5.6">TM</text><rect x="211" y="13" width="1.5" height="64" fill="#3b4654"/><g fill="none" stroke="#fff" stroke-width="1.8" stroke-linejoin="round"><path d="M242.2,53.6 H271.6"/><rect x="243.6" y="46.6" width="3.6" height="7.0"/><rect x="251.1" y="40.6" width="3.6" height="13.0"/><rect x="258.6" y="42.6" width="3.6" height="11.0"/><rect x="266.3" y="35.0" width="3.6" height="18.6"/><circle cx="444.5" cy="45.6" r="16.9" stroke-width="1.7"/><path stroke-width="1.9" d="M450.9,40.2 C449.6,38 447.3,37.2 444.6,37.2 C441,37.2 438.7,39 438.7,41.6 C438.7,44.4 441.3,45.2 444.6,45.9 C448.3,46.7 451.2,47.7 451.2,50.9 C451.2,53.7 448.4,55.2 444.6,55.2 C441.5,55.2 439.2,54 437.8,51.6 M444.6,33.3 V37.2 M444.6,55.2 V57.9"/><circle cx="588.4" cy="35.7" r="2.55" stroke-width="1.6"/><circle cx="588.4" cy="45.5" r="2.55" stroke-width="1.6"/><circle cx="588.4" cy="55.3" r="2.55" stroke-width="1.6"/><circle cx="598.1" cy="35.7" r="2.55" stroke-width="1.6"/><circle cx="598.1" cy="45.5" r="4.4" stroke-width="1.5"/><circle cx="598.1" cy="55.3" r="2.55" stroke-width="1.6"/><circle cx="607.9" cy="35.7" r="2.55" stroke-width="1.6"/><circle cx="607.9" cy="45.5" r="2.55" stroke-width="1.6"/><circle cx="607.9" cy="55.3" r="2.55" stroke-width="1.6"/><path stroke-width="1.3" d="M595,42.4 L590.5,37.8 M601.2,42.4 L605.8,37.8 M595,48.6 L590.5,53.2 M601.2,48.6 L605.8,53.2"/><rect x="818" y="31.1" width="16" height="3.8" rx="0.6"/><rect x="830.7" y="46.6" width="15.9" height="3.2" rx="0.6"/><rect x="830.7" y="56.2" width="15.9" height="3.5" rx="0.6"/><path d="M826.7,35.8 V40 Q826.7,42.7 829.4,42.7 H836.8 Q839.3,42.7 839.3,45.2 V46.6 M839.3,49.8 V56.2"/><path d="M1003.1,59 V37.2 L1007.6,31.1 H1026.8 L1031.7,37.2 V59 Q1031.7,59.9 1030.8,59.9 H1004 Q1003.1,59.9 1003.1,59 Z M1003.1,37.6 H1031.7 M1003.1,44.9 H1031.7 M1003.1,52.4 H1031.7"/><path stroke-width="1.7" stroke-linecap="round" d="M1021.2,41.2 H1028.4 M1021.2,48.8 H1028.4 M1021.2,56.1 H1028.4"/><circle cx="1008" cy="41.2" r="1.7" fill="#fff" stroke="none"/><circle cx="1008" cy="48.8" r="1.7" fill="#fff" stroke="none"/><circle cx="1008" cy="56.1" r="1.7" fill="#fff" stroke="none"/><rect x="1156.6" y="35.8" width="28.6" height="19.8" rx="2.2" stroke-width="1.5"/><circle cx="1160.5" cy="41.6" r="1.05" fill="#fff" stroke="none"/><circle cx="1160.5" cy="45" r="1.05" fill="#fff" stroke="none"/><circle cx="1160.5" cy="48.3" r="1.05" fill="#fff" stroke="none"/><circle cx="1160.5" cy="51.7" r="1.05" fill="#fff" stroke="none"/><circle cx="1163.7" cy="41.6" r="1.05" fill="#fff" stroke="none"/><circle cx="1163.7" cy="45" r="1.05" fill="#fff" stroke="none"/><circle cx="1163.7" cy="48.3" r="1.05" fill="#fff" stroke="none"/><circle cx="1163.7" cy="51.7" r="1.05" fill="#fff" stroke="none"/><path stroke-width="1.1" d="M1168.2,40.3 V52.6"/><circle cx="1168.2" cy="49.1" r="1.6" fill="#fff" stroke="none"/><path stroke-width="1.2" d="M1172.6,45 A4.9,4.9 0 0 1 1182.4,45 Z M1177.5,45 L1180,41.8 M1172.6,52.4 A4.9,4.9 0 0 1 1182.4,52.4 Z M1177.5,52.4 L1175.2,49.6"/><path d="M1392.9,55.4 V44.3 C1392.9,38.9 1396.2,36 1399.7,35 C1400.3,32.2 1401.5,31 1402.6,31 C1403.8,31 1405,32.2 1405.5,35 C1409,36 1412.3,38.9 1412.3,44.3 V55.4 M1388.6,56 H1416.8 M1398.4,56.4 A4.2,4 0 0 0 1406.8,56.4"/><rect x="2194" y="30.1" width="7.4" height="7.4" fill="#fff" stroke="none"/><rect x="2194" y="40.9" width="7.4" height="7.4" fill="#fff" stroke="none"/><rect x="2194" y="51.7" width="7.4" height="7.4" fill="#fff" stroke="none"/><rect x="2204.7" y="30.1" width="7.4" height="7.4" fill="#fff" stroke="none"/><rect x="2204.7" y="40.9" width="7.4" height="7.4" fill="#fff" stroke="none"/><rect x="2204.7" y="51.7" width="7.4" height="7.4" fill="#fff" stroke="none"/><rect x="2215.5" y="30.1" width="7.4" height="7.4" fill="#fff" stroke="none"/><rect x="2215.5" y="40.9" width="7.4" height="7.4" fill="#fff" stroke="none"/><rect x="2215.5" y="51.7" width="7.4" height="7.4" fill="#fff" stroke="none"/><path stroke-width="2.9" stroke-linecap="round" stroke-linejoin="round" d="M2239.8,42.6 L2244.4,46.9 L2249.0,42.6"/><path stroke-width="2.9" stroke-linecap="round" stroke-linejoin="round" d="M2339.6,42.6 L2344.2,46.9 L2348.8,42.6"/><path stroke-width="2.9" stroke-linecap="round" stroke-linejoin="round" d="M2432.4,42.6 L2437.0,46.9 L2441.6,42.6"/><path stroke-width="2.9" stroke-linecap="round" stroke-linejoin="round" d="M2532.6,42.6 L2537.2,46.9 L2541.8,42.6"/><path stroke-width="1.5" d="M2315.91,46.91 L2317.99,49.39 L2316.46,51.81 L2313.33,51.00 L2311.57,52.46 L2311.80,55.69 L2309.13,56.75 L2307.07,54.24 L2304.79,54.39 L2303.08,57.14 L2300.30,56.43 L2300.11,53.20 L2298.17,51.98 L2295.17,53.19 L2293.34,50.99 L2295.08,48.26 L2294.24,46.13 L2291.09,45.35 L2290.91,42.49 L2293.93,41.31 L2294.49,39.09 L2292.41,36.61 L2293.94,34.19 L2297.07,35.00 L2298.83,33.54 L2298.60,30.31 L2301.27,29.25 L2303.33,31.76 L2305.61,31.61 L2307.32,28.86 L2310.10,29.57 L2310.29,32.80 L2312.23,34.02 L2315.23,32.81 L2317.06,35.01 L2315.32,37.74 L2316.16,39.87 L2319.31,40.65 L2319.49,43.51 L2316.47,44.69 Z"/><path stroke-width="1.4" d="M2297.6,46.5 A8,8 0 0 1 2302.3,35.6 M2312.8,39.5 A8,8 0 0 1 2308.2,50.6"/></g><g transform="translate(2306.5,41.8) rotate(-45)" fill="#01182b" stroke="#fff" stroke-width="1.5" stroke-linejoin="round"><path d="M-13.2,-2.5 H10.2 L12,-5.6 L17.6,-5.6 L19.6,-2.2 L15.6,-2.2 L15.6,2.2 L19.6,2.2 L17.6,5.6 L12,5.6 L10.2,2.5 H-13.2 A5.4,5.4 0 1 1 -13.2,-2.5 Z"/><circle cx="-17.3" cy="0" r="1.9"/></g><g fill="none" stroke="#fff" stroke-width="1.7"><circle cx="2401.2" cy="44.6" r="15.4"/><path stroke-width="1.9" stroke-linecap="round" d="M2396.6,39.0 C2397.2,37.0 2399,36.0 2401.3,36.0 C2404.1,36.0 2406,37.7 2406,39.9 C2406,42.3 2404,43.1 2402.4,43.9 C2401.6,44.3 2401.2,44.9 2401.2,46.0 V48.2"/><circle cx="2401.2" cy="52.9" r="1.35" fill="#fff" stroke="none"/><circle cx="2497.8" cy="44.6" r="15.8"/><path stroke-width="1.6" d="M2487.3,56.6 C2489,55.2 2491.5,54.6 2493.8,53.4 C2494.9,52.8 2494.9,51.5 2494.4,50.5 C2493.4,49 2492.3,47.3 2492.6,45.4 C2491.9,44.6 2492.3,43.6 2492.6,42.8 C2492.4,38.6 2494.3,34.5 2497.8,34.5 C2501.3,34.5 2503.2,38.6 2503,42.8 C2503.3,43.6 2503.7,44.6 2503,45.4 C2503.3,47.3 2502.2,49 2501.2,50.5 C2500.7,51.5 2500.7,52.8 2501.8,53.4 C2504.1,54.6 2506.6,55.2 2508.3,56.6"/></g></svg>
<div class="t" style="left:295.63px;top:33px;font-size:24.25px;color:#ffffff;transform:scaleX(0.9955);transform-origin:0 0;">Insights</div>
<div class="t" style="left:484.34px;top:33px;font-size:24.25px;color:#ffffff;transform:scaleX(0.9568);transform-origin:0 0;">Cost</div>
<div class="t" style="left:639.20px;top:33px;font-size:24.25px;color:#ffffff;transform:scaleX(0.9405);transform-origin:0 0;">Warehouses</div>
<div class="t" style="left:872.10px;top:33px;font-size:24.25px;color:#ffffff;transform:scaleX(0.9253);transform-origin:0 0;">Queries</div>
<div class="t" style="left:1055.47px;top:33px;font-size:24.25px;color:#ffffff;transform:scaleX(0.9458);transform-origin:0 0;">Data</div>
<div class="t" style="left:1209.54px;top:33px;font-size:24.25px;color:#ffffff;transform:scaleX(0.9595);transform-origin:0 0;">Dashboards</div>
<div class="t" style="left:1441.40px;top:33px;font-size:24.25px;color:#ffffff;transform:scaleX(0.9844);transform-origin:0 0;">Alerting</div>
</div>
</div>
</body></html>
